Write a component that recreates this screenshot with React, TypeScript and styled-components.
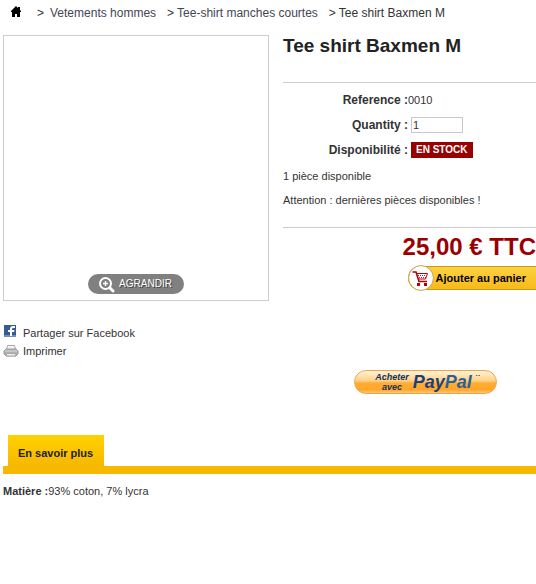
import React from "react";
import styled, { createGlobalStyle } from "styled-components";

const Global = createGlobalStyle`
  *, *::before, *::after { box-sizing: border-box; }
  body {
    margin: 0;
    background: #fff;
    color: #333;
    font: 11px/16px "Liberation Sans", Arial, sans-serif;
    overflow-x: hidden;
  }
  h1, p, ul { margin: 0; padding: 0; }
  a { color: inherit; text-decoration: none; }
`;

const Page = styled.main`
  padding: 4px 0 0 3px;
`;

const Breadcrumb = styled.nav`
  display: flex;
  align-items: center;
  height: 18px;
  padding-left: 7px;
  font-size: 12px;
  white-space: nowrap;
`;

const HomeLink = styled.a`
  display: flex;
  margin-right: 15px;
  padding-bottom: 4px;
  svg { display: block; }
`;

const Crumb = styled.span<{ $first?: boolean }>`
  margin-right: ${(p) => (p.$first ? 6 : 3)}px;
`;

const CrumbLink = styled.a`
  margin-right: 11px;
  color: #445;
`;

const Product = styled.section`
  display: flex;
  align-items: flex-start;
  gap: 14px;
  margin-top: 13px;
`;

const Media = styled.div`
  flex: none;
  width: 266px;
`;

const Picture = styled.div`
  display: flex;
  align-items: flex-end;
  justify-content: center;
  aspect-ratio: 1;
  padding-bottom: 6px;
  border: 1px solid #ccc;
`;

const ZoomButton = styled.button`
  display: flex;
  align-items: center;
  gap: 4px;
  height: 20px;
  padding: 0 12px 0 10px;
  border: 0;
  border-radius: 10px;
  background: #808080;
  color: #fff;
  font: 10px/20px "Liberation Sans", Arial, sans-serif;
  text-shadow: 1px 1px 0 #444;
`;

const Actions = styled.ul`
  display: flex;
  flex-direction: column;
  gap: 2px;
  margin-top: 24px;
  list-style: none;
`;

const ActionLink = styled.a`
  display: flex;
  align-items: center;
  gap: 4px;
  height: 16px;
  svg { flex: none; }
`;

const Details = styled.div`
  flex: 1;
  min-width: 0;
`;

const Title = styled.h1`
  padding-bottom: 25px;
  border-bottom: 1px solid #ccc;
  color: #222;
  font-size: 19px;
  line-height: 22px;
`;

const Facts = styled.div`
  display: flex;
  flex-direction: column;
  gap: 9px;
  margin-top: 9px;
`;

const Fact = styled.div`
  display: flex;
  align-items: center;
  height: 16px;
`;

const FactLabel = styled.label<{ $gap?: boolean }>`
  width: 125px;
  margin-right: ${(p) => (p.$gap ? 3 : 0)}px;
  font-size: 12px;
  font-weight: bold;
  text-align: right;
  white-space: nowrap;
`;

const Quantity = styled.input`
  width: 52px;
  height: 16px;
  padding: 0 1px;
  border: 1px solid #c8c8d0;
  background: #fff;
  color: #333;
  font: 11px "Liberation Sans", Arial, sans-serif;
`;

const Stock = styled.output`
  padding: 0 5px;
  background: #900;
  color: #fff;
  font-size: 10px;
  font-weight: bold;
`;

const Notes = styled.div`
  display: flex;
  flex-direction: column;
  gap: 8px;
  margin-top: 10px;
`;

const Purchase = styled.div`
  display: flex;
  flex-direction: column;
  align-items: flex-end;
  margin-top: 19px;
  padding-top: 4px;
  border-top: 1px solid #ccc;
`;

const Price = styled.p`
  color: #900;
  font-size: 24px;
  font-weight: bold;
  line-height: 30px;
  white-space: nowrap;
`;

const CartButton = styled.button`
  display: flex;
  align-items: center;
  gap: 2px;
  height: 24px;
  margin-top: 4px;
  padding: 0 10px 0 0;
  border: solid #c99a14;
  border-width: 1px 0;
  border-radius: 13px 0 0 13px;
  background: linear-gradient(#fbd341, #f9b91a);
  color: #000;
  font: bold 11px "Liberation Sans", Arial, sans-serif;
  white-space: nowrap;
  svg { flex: none; }
`;

const PayPalRow = styled.div`
  margin: 80px 0 0 71px;
`;

const PayPalButton = styled.button`
  display: flex;
  align-items: center;
  justify-content: center;
  gap: 4px;
  width: 143px;
  height: 24px;
  padding: 0 0 0 4px;
  border: 1px solid #eba84a;
  border-radius: 12px;
  background: linear-gradient(#fff2d8 0%, #ffd084 45%, #ffad32 55%, #ffa52b 85%, #ffc774 100%);
  color: #14315f;
  font: italic bold 9px/10px "Liberation Sans", Arial, sans-serif;
`;

const PayPalMark = styled.strong`
  color: #1b3f78;
  font-size: 18px;
  line-height: 20px;
  span { color: #2c5f96; }
`;

const Info = styled.section`
  margin-top: 41px;
`;

const Tabs = styled.div`
  display: flex;
  padding-left: 5px;
  border-bottom: 8px solid #f6b800;
`;

const Tab = styled.button`
  height: 31px;
  padding: 4px 11px 0 10px;
  border: 0;
  background: linear-gradient(#ffd200, #f6b800);
  color: #222;
  font: bold 11px "Liberation Sans", Arial, sans-serif;
`;

const Description = styled.p`
  margin-top: 9px;
`;

const HomeIcon = () => (
  <svg width="12" height="12" viewBox="0 0 12 12" aria-hidden="true">
    <path d="M6 1 8 3V2h2v3l1 1v1h-1v5H7V9H5v3H2V7H1V6z" fill="#000" />
  </svg>
);

const ZoomIcon = () => (
  <svg width="17" height="17" viewBox="0 0 17 17" fill="none" stroke="#fff" aria-hidden="true">
    <circle cx="7.500" cy="7.500" r="5.500" strokeWidth="2" />
    <path d="m12 12 3 3" strokeWidth="3" strokeLinecap="round" />
    <path d="M5 7.500h5M7.500 5v5" strokeWidth="1.400" />
  </svg>
);

const FacebookIcon = () => (
  <svg width="16" height="16" viewBox="0 0 16 16" aria-hidden="true">
    <path d="M1 0h12v12H1z" fill="#345a98" />
    <path d="M1 10h12v2H1z" fill="#6f8dbd" />
    <path d="M7 11V7H5V5h2V4q0-3 3-3h2v2h-1.500Q9 3 9 4v1h2.500l-.4 2H9v4z" fill="#fff" />
  </svg>
);

const PrinterIcon = () => (
  <svg width="16" height="16" viewBox="0 0 16 16" aria-hidden="true">
    <path d="M4.500 2.500h7l1 4h-9z" fill="#f5f5f5" stroke="#aaa" />
    <path d="M3 6h10l2 2v3l-2 2H3l-2-2V8z" fill="#b0b0b0" stroke="#999" />
    <path d="M2 8h12" stroke="#ddd" />
    <path d="M4 10.500h8l1 2.500H3z" fill="#eee" stroke="#aaa" />
  </svg>
);

const CartIcon = () => (
  <svg width="26" height="26" viewBox="0 0 26 26" aria-hidden="true">
    <circle cx="13" cy="13" r="12.400" fill="#fff" stroke="#c9a14a" />
    <path d="M4.500 7H8l3 9.500h8" fill="none" stroke="#b3000c" strokeWidth="1.600" />
    <path d="M9 8.500h10.500l-2 5.500H11" fill="none" stroke="#b3000c" />
    <path d="M10 10.500h8M11 12.500h7" stroke="#c8101b" strokeDasharray="1 1" />
    <path d="M9 18h3v3H9zM16 18h3v3h-3z" fill="#b3000c" />
  </svg>
);

const TrademarkDots = () => (
  <svg width="4" height="16" viewBox="0 0 4 16" aria-hidden="true">
    <path d="M0 1.500h1.500M2.500 1.500H4" stroke="#5a6c86" />
  </svg>
);

export default function App() {
  return (
    <>
      <Global />
      <Page>
        <Breadcrumb aria-label="Breadcrumb">
          <HomeLink href="#" aria-label="Accueil"><HomeIcon /></HomeLink>
          <Crumb $first>&gt;</Crumb>
          <CrumbLink href="#">Vetements hommes</CrumbLink>
          <Crumb>&gt;</Crumb>
          <CrumbLink href="#">Tee-shirt manches courtes</CrumbLink>
          <Crumb>&gt;</Crumb>
          <Crumb>Tee shirt Baxmen M</Crumb>
        </Breadcrumb>

        <Product>
          <Media>
            <Picture>
              <ZoomButton type="button"><ZoomIcon />AGRANDIR</ZoomButton>
            </Picture>
            <Actions>
              <li><ActionLink href="#"><FacebookIcon />Partager sur Facebook</ActionLink></li>
              <li><ActionLink href="#"><PrinterIcon />Imprimer</ActionLink></li>
            </Actions>
          </Media>

          <Details>
            <Title>Tee shirt Baxmen M</Title>
            <Facts>
              <Fact>
                <FactLabel htmlFor="reference">Reference :</FactLabel>
                <output id="reference">0010</output>
              </Fact>
              <Fact>
                <FactLabel htmlFor="quantity" $gap>Quantity :</FactLabel>
                <Quantity id="quantity" type="text" defaultValue="1" />
              </Fact>
              <Fact>
                <FactLabel htmlFor="stock" $gap>Disponibilité :</FactLabel>
                <Stock id="stock">EN STOCK</Stock>
              </Fact>
            </Facts>
            <Notes>
              <p>1 pièce disponible</p>
              <p>Attention : dernières pièces disponibles !</p>
            </Notes>
            <Purchase>
              <Price>25,00 € TTC</Price>
              <CartButton type="button"><CartIcon />Ajouter au panier</CartButton>
            </Purchase>
            <PayPalRow>
              <PayPalButton type="button">
                <span>Acheter<br />avec</span>
                <PayPalMark>Pay<span>Pal</span></PayPalMark>
                <TrademarkDots />
              </PayPalButton>
            </PayPalRow>
          </Details>
        </Product>

        <Info>
          <Tabs role="tablist">
            <Tab type="button" role="tab" aria-selected="true">En savoir plus</Tab>
          </Tabs>
          <Description><b>Matière :</b>93% coton, 7% lycra</Description>
        </Info>
      </Page>
    </>
  );
}
